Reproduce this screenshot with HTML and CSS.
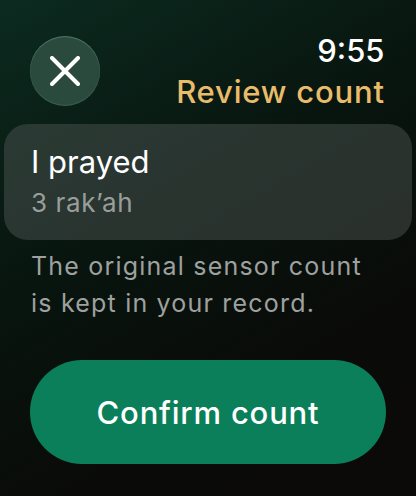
FILE: index.html
```html
<!DOCTYPE html>
<html>
<head>
<meta charset="utf-8">
<link rel="stylesheet" href="styles.css">
</head>
<body>
<div class="screen">
  <header class="top">
    <button class="close" aria-label="Close">
      <svg width="30" height="30" viewBox="0 0 30 30"><path d="M2 2 L28 28 M28 2 L2 28" stroke="#fff" stroke-width="4" stroke-linecap="round" fill="none"/></svg>
    </button>
    <div class="titles">
      <div class="time">9:55</div>
      <div class="title">Review count</div>
    </div>
  </header>
  <section class="card">
    <div class="card-title">I prayed</div>
    <div class="card-sub">3 rak’ah</div>
  </section>
  <p class="note">The original sensor count is kept in your record.</p>
  <button class="confirm">Confirm count</button>
</div>
</body>
</html>
```
FILE: styles.css
```css
html, body {
  margin: 0;
  padding: 0;
}
body {
  width: 416px;
  height: 496px;
  overflow: hidden;
  background: linear-gradient(150deg, #0c2b20 0%, #08150f 40%, #0a0a08 75%, #0b0a08 100%);
  font-family: Inter, "Noto Sans", sans-serif;
  color: #fff;
}
.screen {
  display: flex;
  flex-direction: column;
  padding: 0 4px;
}
.top {
  display: flex;
  justify-content: space-between;
  align-items: flex-start;
  padding: 36px 28px 0 26px;
  height: 88px;
}
.close {
  width: 70px;
  height: 70px;
  border-radius: 50%;
  border: none;
  padding: 0;
  display: flex;
  align-items: center;
  justify-content: center;
  background: #2a4a3d;
  box-shadow: inset 0 1px 1px rgba(160, 210, 190, 0.35), inset 0 -1px 1px rgba(120, 170, 150, 0.25);
}
.titles {
  display: flex;
  flex-direction: column;
  align-items: flex-end;
  margin-top: -3px;
}
.time {
  font-size: 31px;
  font-weight: 500;
  line-height: 36px;
  margin-right: -0.5px;
}
.title {
  font-size: 31px;
  font-weight: 500;
  color: #e9bc6b;
  line-height: 36px;
  margin-top: 5px;
  letter-spacing: 0.8px;
  margin-right: -0.8px;
}
.card {
  background: rgba(70, 78, 74, 0.55);
  border-radius: 24px;
  padding: 19px 27px 0;
  height: 116px;
  box-sizing: border-box;
}
.card-title {
  font-size: 31px;
  line-height: 38px;
}
.card-sub {
  font-size: 26px;
  line-height: 32px;
  margin-top: 6px;
  color: #9a9e9b;
  letter-spacing: 0.6px;
}
.note {
  margin: 8px 0 0;
  padding: 0 27px;
  font-size: 25px;
  line-height: 37px;
  color: #9ea19f;
  letter-spacing: 1.2px;
}
.confirm {
  margin: 38px 0 0 26px;
  width: 356px;
  height: 104px;
  border-radius: 52px;
  border: none;
  background: #0a7f5a;
  color: #fff;
  font-family: Inter, "Noto Sans", sans-serif;
  font-size: 31px;
  font-weight: 500;
  letter-spacing: 0.8px;
  padding: 0;
}
```
